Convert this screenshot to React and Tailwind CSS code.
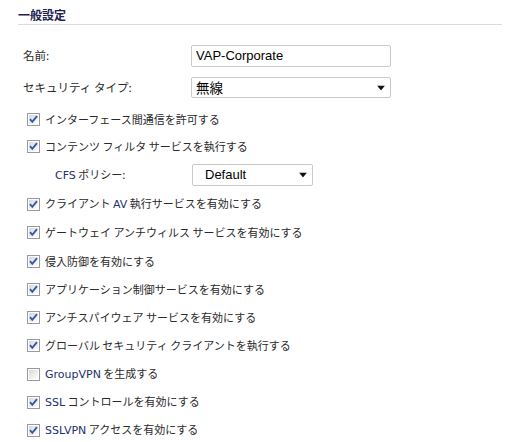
import React from "react";

const JP = { fontFamily: '"Noto Sans CJK JP", "Noto Sans", sans-serif' };
const LAT = { fontFamily: '"DejaVu Sans", "Liberation Sans", sans-serif' };
const ARIAL = { fontFamily: '"Liberation Sans", Arial, sans-serif' };

function Box({ checked }) {
  return (
    <svg width="13" height="13" viewBox="0 0 13 13" className="shrink-0">
      <defs>
        <linearGradient id="cbg" x1="0" y1="0" x2="1" y2="1">
          <stop offset="0" stopColor="#d8d8d8" />
          <stop offset="1" stopColor="#ffffff" />
        </linearGradient>
      </defs>
      <rect x="0.5" y="0.5" width="12" height="12" fill="#fff" stroke="#9a9a9a" />
      <rect x="2" y="2" width="9" height="9" fill="url(#cbg)" />
      {checked && (
        <path d="M3 6.2 L5.3 8.8 L10 3.2" fill="none" stroke="#3358b0" strokeWidth="1.9" />
      )}
    </svg>
  );
}

function Lat({ children }) {
  return (
    <span className="text-[11px] text-[#23306e]" style={LAT}>
      {children}
    </span>
  );
}

function Row({ checked, children, h = "h-[28px]" }) {
  return (
    <div className={`flex items-center gap-[5px] pl-[27px] ${h}`}>
      <Box checked={checked} />
      <span className="text-[11px] text-[#2a2a2a] leading-none whitespace-nowrap" style={JP}>
        {children}
      </span>
    </div>
  );
}

function Arrow() {
  return (
    <svg width="8" height="5" viewBox="0 0 8 5" className="absolute right-[5px] top-1/2 -translate-y-1/2">
      <path d="M0 0 H8 L4 5 Z" fill="#111" />
    </svg>
  );
}

export default function App() {
  return (
    <div className="w-[514px] h-[442px] bg-white overflow-hidden">
      <div className="ml-[18px] mr-[12px] h-[25px] border-b border-[#dcdcdc] flex items-end pb-[3px]">
        <span className="text-[12px] font-bold text-[#1e2050] leading-none" style={JP}>
          一般設定
        </span>
      </div>

      <div className="mt-[20px] flex items-center h-[22px]">
        <span className="pl-[23px] w-[191px] text-[11.5px] text-[#2a2a2a]" style={JP}>名前:</span>
        <div
          className="w-[200px] h-[22px] border border-[#c9c9c9] rounded-[2px] flex items-center pl-[4px] text-[13px] text-black"
          style={ARIAL}
        >
          VAP-Corporate
        </div>
      </div>

      <div className="mt-[10px] flex items-center h-[21px]">
        <span className="pl-[23px] w-[191px] text-[11.5px] text-[#2a2a2a]" style={JP}>セキュリティ タイプ:</span>
        <div className="relative w-[200px] h-[21px] border border-[#c9c9c9] rounded-[2px] flex items-center pl-[4px] text-[13.5px] text-black" style={JP}>
          無線
          <Arrow />
        </div>
      </div>

      <div className="mt-[7px]">
        <Row checked>インターフェース間通信を許可する</Row>
        <Row checked h="h-[27px]">コンテンツ フィルタ サービスを執行する</Row>
        <div className="flex items-center h-[30px]">
          <span className="pl-[55px] w-[192px] text-[11px] text-[#2a2a2a] whitespace-nowrap" style={JP}>
            <Lat>CFS</Lat> ポリシー:
          </span>
          <div
            className="relative w-[121px] h-[22px] border border-[#c9c9c9] rounded-[2px] flex items-center pl-[12px] text-[13px] text-black"
            style={ARIAL}
          >
            Default
            <Arrow />
          </div>
        </div>
        <Row checked>クライアント <Lat>AV</Lat> 執行サービスを有効にする</Row>
        <Row checked h="h-[29px]">ゲートウェイ アンチウィルス サービスを有効にする</Row>
        <Row checked>侵入防御を有効にする</Row>
        <Row checked>アプリケーション制御サービスを有効にする</Row>
        <Row checked>アンチスパイウェア サービスを有効にする</Row>
        <Row checked h="h-[29px]">グローバル セキュリティ クライアントを執行する</Row>
        <Row checked={false}><Lat>GroupVPN</Lat> を生成する</Row>
        <Row checked><Lat>SSL</Lat> コントロールを有効にする</Row>
        <Row checked><Lat>SSLVPN</Lat> アクセスを有効にする</Row>
      </div>
    </div>
  );
}
